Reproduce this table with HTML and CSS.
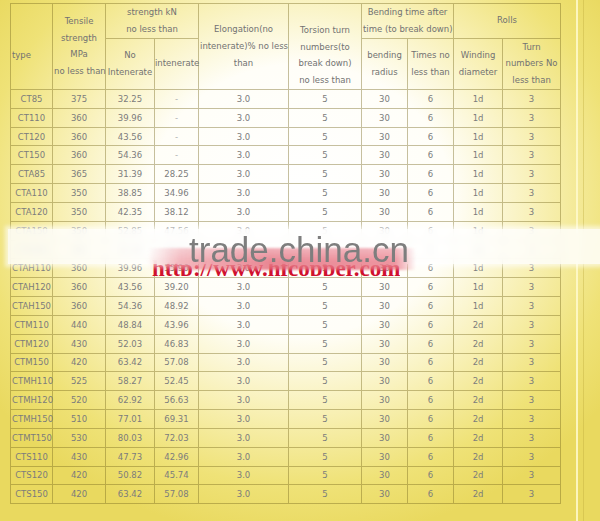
FILE: index.html
```html
<!DOCTYPE html>
<html>
<head>
<meta charset="utf-8">
<link rel="stylesheet" href="styles.css">
</head>
<body>
<table class="spec">
  <colgroup>
    <col class="c-type"><col class="c-ten"><col class="c-no"><col class="c-int"><col class="c-elo"><col class="c-tor"><col class="c-bend"><col class="c-times"><col class="c-wind"><col class="c-turn">
  </colgroup>
  <thead>
    <tr class="hr1">
      <th rowspan="2" class="th-type">type</th>
      <th rowspan="2">Tensile<br>strength<br>MPa<br>no less than</th>
      <th colspan="2">strength kN<br>no less than</th>
      <th rowspan="2">Elongation(no<br>intenerate)% no less<br>than</th>
      <th rowspan="2" class="th-tor">Torsion turn<br>numbers(to<br>break down)<br>no less than</th>
      <th colspan="2">Bending time after<br>time (to break down)</th>
      <th colspan="2">Rolls</th>
    </tr>
    <tr class="hr2">
      <th>No<br>Intenerate</th>
      <th class="th-left">intenerate</th>
      <th>bending<br>radius</th>
      <th>Times no<br>less than</th>
      <th>Winding<br>diameter</th>
      <th>Turn<br>numbers No<br>less than</th>
    </tr>
  </thead>
  <tbody>
    <tr><td>CT85</td><td>375</td><td>32.25</td><td class="dash">-</td><td>3.0</td><td>5</td><td>30</td><td>6</td><td>1d</td><td>3</td></tr>
    <tr><td>CT110</td><td>360</td><td>39.96</td><td class="dash">-</td><td>3.0</td><td>5</td><td>30</td><td>6</td><td>1d</td><td>3</td></tr>
    <tr><td>CT120</td><td>360</td><td>43.56</td><td class="dash">-</td><td>3.0</td><td>5</td><td>30</td><td>6</td><td>1d</td><td>3</td></tr>
    <tr><td>CT150</td><td>360</td><td>54.36</td><td class="dash">-</td><td>3.0</td><td>5</td><td>30</td><td>6</td><td>1d</td><td>3</td></tr>
    <tr><td>CTA85</td><td>365</td><td>31.39</td><td>28.25</td><td>3.0</td><td>5</td><td>30</td><td>6</td><td>1d</td><td>3</td></tr>
    <tr><td>CTA110</td><td>350</td><td>38.85</td><td>34.96</td><td>3.0</td><td>5</td><td>30</td><td>6</td><td>1d</td><td>3</td></tr>
    <tr><td>CTA120</td><td>350</td><td>42.35</td><td>38.12</td><td>3.0</td><td>5</td><td>30</td><td>6</td><td>1d</td><td>3</td></tr>
    <tr><td>CTA150</td><td>350</td><td>52.85</td><td>47.56</td><td>3.0</td><td>5</td><td>30</td><td>6</td><td>1d</td><td>3</td></tr>
    <tr><td>CTAH85</td><td>365</td><td>31.39</td><td>28.25</td><td>3.0</td><td>5</td><td>30</td><td>6</td><td>1d</td><td>3</td></tr>
    <tr><td>CTAH110</td><td>360</td><td>39.96</td><td>35.96</td><td>3.0</td><td>5</td><td>30</td><td>6</td><td>1d</td><td>3</td></tr>
    <tr><td>CTAH120</td><td>360</td><td>43.56</td><td>39.20</td><td>3.0</td><td>5</td><td>30</td><td>6</td><td>1d</td><td>3</td></tr>
    <tr><td>CTAH150</td><td>360</td><td>54.36</td><td>48.92</td><td>3.0</td><td>5</td><td>30</td><td>6</td><td>1d</td><td>3</td></tr>
    <tr><td>CTM110</td><td>440</td><td>48.84</td><td>43.96</td><td>3.0</td><td>5</td><td>30</td><td>6</td><td>2d</td><td>3</td></tr>
    <tr><td>CTM120</td><td>430</td><td>52.03</td><td>46.83</td><td>3.0</td><td>5</td><td>30</td><td>6</td><td>2d</td><td>3</td></tr>
    <tr><td>CTM150</td><td>420</td><td>63.42</td><td>57.08</td><td>3.0</td><td>5</td><td>30</td><td>6</td><td>2d</td><td>3</td></tr>
    <tr><td>CTMH110</td><td>525</td><td>58.27</td><td>52.45</td><td>3.0</td><td>5</td><td>30</td><td>6</td><td>2d</td><td>3</td></tr>
    <tr><td>CTMH120</td><td>520</td><td>62.92</td><td>56.63</td><td>3.0</td><td>5</td><td>30</td><td>6</td><td>2d</td><td>3</td></tr>
    <tr><td>CTMH150</td><td>510</td><td>77.01</td><td>69.31</td><td>3.0</td><td>5</td><td>30</td><td>6</td><td>2d</td><td>3</td></tr>
    <tr><td>CTMT150</td><td>530</td><td>80.03</td><td>72.03</td><td>3.0</td><td>5</td><td>30</td><td>6</td><td>2d</td><td>3</td></tr>
    <tr><td>CTS110</td><td>430</td><td>47.73</td><td>42.96</td><td>3.0</td><td>5</td><td>30</td><td>6</td><td>2d</td><td>3</td></tr>
    <tr><td>CTS120</td><td>420</td><td>50.82</td><td>45.74</td><td>3.0</td><td>5</td><td>30</td><td>6</td><td>2d</td><td>3</td></tr>
    <tr><td>CTS150</td><td>420</td><td>63.42</td><td>57.08</td><td>3.0</td><td>5</td><td>30</td><td>6</td><td>2d</td><td>3</td></tr>
  </tbody>
</table>

<div class="wm-url"><span>http://www.hfcopper.com</span></div>
<div class="wm-band"></div>
<div class="wm-pink"></div>
<div class="wm-trade">trade.china.cn</div>
</body>
</html>
```

FILE: styles.css
```css
html, body {
  margin: 0;
  padding: 0;
}

body {
  width: 600px;
  height: 521px;
  overflow: hidden;
  position: relative;
  font-family: "DejaVu Sans", Verdana, sans-serif;
  font-size: 8.5px;
  color: #7c7c7c;
  background:
    linear-gradient(to right,
      transparent 576px,
      rgba(255, 250, 205, 0.85) 576px, rgba(255, 250, 205, 0.85) 578px,
      transparent 578px, transparent 583px,
      rgba(185, 165, 55, 0.35) 583px, rgba(185, 165, 55, 0.35) 584px,
      transparent 584px),
    radial-gradient(ellipse 380px 340px at 300px 200px,
      #ffffff 0%, #fffef8 40%, #f8f0b4 63%, #efe277 84%, #e9d95f 100%);
}

.spec {
  --line: rgba(120, 105, 30, 0.42);
  border-collapse: separate;
  border-spacing: 0;
  table-layout: fixed;
  width: 551px;
  margin: 3px 0 0 10px;
  border-top: 1px solid var(--line);
  border-left: 1px solid var(--line);
}

.c-type { width: 42px; }
.c-ten { width: 53px; }
.c-no { width: 49px; }
.c-int { width: 44px; }
.c-elo { width: 90px; }
.c-tor { width: 73px; }
.c-bend { width: 46px; }
.c-times { width: 46px; }
.c-wind { width: 49px; }
.c-turn { width: 58px; }

.spec th,
.spec td {
  box-sizing: border-box;
  border-right: 1px solid var(--line);
  border-bottom: 1px solid var(--line);
  padding: 0 1px;
  text-align: center;
  vertical-align: middle;
  white-space: nowrap;
  font-weight: normal;
  overflow: visible;
}

.spec th {
  line-height: 16.7px;
  color: #727272;
}

.spec td {
  line-height: 12px;
}

.hr1 { height: 34.7px; }
.hr2 { height: 51.3px; }

.spec tbody tr { height: 18.84px; }

.spec .th-type {
  text-align: left;
  vertical-align: top;
  padding-top: 43px;
}

.spec .th-tor {
  vertical-align: top;
  padding-top: 18px;
}

.spec .th-left {
  text-align: left;
  padding-left: 0;
}

.spec .dash {
  color: #b0b0b0;
}

/* watermark overlay */
.wm-url {
  position: absolute;
  left: 152px;
  top: 257px;
  height: 18.5px;
  overflow: hidden;
}

.wm-url span {
  display: block;
  font-family: "Liberation Serif", "Times New Roman", serif;
  font-weight: bold;
  font-size: 23px;
  line-height: 23px;
  color: #d0102e;
  white-space: nowrap;
}

.wm-band {
  position: absolute;
  left: 8px;
  top: 229px;
  width: 592px;
  height: 35px;
  background: rgba(255, 255, 255, 0.84);
  backdrop-filter: blur(4px);
  box-shadow: 0 0 4px 3px rgba(255, 255, 255, 0.6);
}

.wm-pink {
  position: absolute;
  left: 148px;
  top: 248px;
  width: 268px;
  height: 22px;
  background:
    linear-gradient(to bottom, rgba(255, 255, 255, 0.35) 0%, rgba(255, 255, 255, 0) 60%),
    linear-gradient(to right,
      rgba(232, 112, 126, 0) 0%,
      rgba(232, 112, 126, 0.5) 12%,
      rgba(226, 98, 114, 0.75) 45%,
      rgba(230, 104, 120, 0.7) 92%,
      rgba(232, 112, 126, 0) 100%);
  filter: blur(1px);
}

.wm-trade {
  position: absolute;
  left: 189px;
  top: 233px;
  font-family: "Liberation Sans", Arial, sans-serif;
  font-size: 35px;
  line-height: 34px;
  color: #7e7e7e;
  white-space: nowrap;
}
```
